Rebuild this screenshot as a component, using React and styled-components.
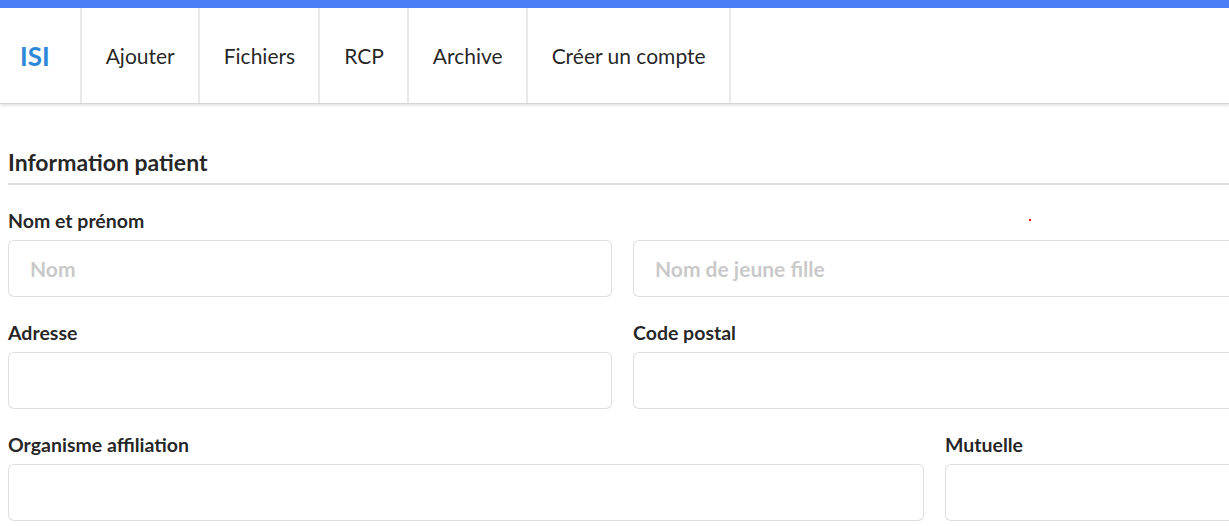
import React from 'react';
import styled, { createGlobalStyle } from 'styled-components';

const GlobalStyle = createGlobalStyle`
    html, body {
        margin: 0;
        padding: 0;
        background: #ffffff;
        overflow: hidden;
    }
    body {
        font-family: Lato, "Open Sans", sans-serif;
        color: rgba(0, 0, 0, 0.87);
    }
    * {
        box-sizing: border-box;
    }
`;

const TopBar = styled.div`
    height: 8px;
    background-color: #4a7ef7;
`;

const Menu = styled.nav`
    display: flex;
    height: 96px;
    background: #ffffff;
    border-bottom: 1px solid #d4d4d5;
    box-shadow: 0 1.5px 3px 0 rgba(34, 36, 38, 0.15);
`;

const MenuItem = styled.a`
    display: flex;
    align-items: center;
    padding-left: ${(props) => (props.header ? '20px' : '24px')};
    padding-right: ${(props) => (props.header ? '30px' : '23px')};
    font-size: ${(props) => (props.header ? '26px' : '21px')};
    font-weight: ${(props) => (props.header ? 700 : 400)};
    color: ${(props) => (props.header ? '#2f87d8' : 'rgba(0, 0, 0, 0.87)')};
    border-right: 2px solid #e8e8e8;
    cursor: pointer;
`;

const Page = styled.main`
    width: 1250px;
    padding: 45px 0 0 8px;
`;

const SectionTitle = styled.h4`
    margin: 0 0 24px 0;
    padding-bottom: 8px;
    font-size: 23px;
    font-weight: 700;
    line-height: 26px;
    color: rgba(0, 0, 0, 0.87);
    border-bottom: 2px solid #e0e0e0;
`;

const Row = styled.div`
    display: grid;
    grid-template-columns: ${(props) => props.columns};
    column-gap: 21px;
    margin-bottom: 24px;
`;

const Field = styled.div`
    position: relative;
    display: flex;
    flex-direction: column;
`;

const Label = styled.label`
    display: block;
    min-height: 30px;
    margin-bottom: 1px;
    font-size: 19.5px;
    font-weight: 700;
    line-height: 24px;
    color: rgba(0, 0, 0, 0.87);
`;

const Input = styled.input`
    width: 100%;
    height: 57px;
    padding: 0 21px;
    font-family: Lato, "Open Sans", sans-serif;
    font-size: 21px;
    font-weight: 700;
    color: rgba(0, 0, 0, 0.87);
    background: #ffffff;
    border: 1.5px solid rgba(34, 36, 38, 0.15);
    border-radius: 6px;
    outline: none;

    &::placeholder {
        color: rgba(191, 191, 191, 0.87);
    }
`;

const RequiredDot = styled.span`
    position: absolute;
    top: 10px;
    left: 396px;
    width: 2px;
    height: 2px;
    background: #ff0000;
`;

const menuItems = ['Ajouter', 'Fichiers', 'RCP', 'Archive', 'Créer un compte'];

const App = () => {
    return (
        <>
            <GlobalStyle />
            <TopBar />
            <Menu>
                <MenuItem header>ISI</MenuItem>
                {menuItems.map((item) => (
                    <MenuItem key={item}>{item}</MenuItem>
                ))}
            </Menu>
            <Page>
                <SectionTitle>Information patient</SectionTitle>
                <Row columns="604px 604px">
                    <Field>
                        <Label>Nom et prénom</Label>
                        <Input placeholder="Nom" />
                    </Field>
                    <Field>
                        <Label />
                        <RequiredDot />
                        <Input placeholder="Nom de jeune fille" />
                    </Field>
                </Row>
                <Row columns="604px 604px">
                    <Field>
                        <Label>Adresse</Label>
                        <Input />
                    </Field>
                    <Field>
                        <Label>Code postal</Label>
                        <Input />
                    </Field>
                </Row>
                <Row columns="916px 292px">
                    <Field>
                        <Label>Organisme affiliation</Label>
                        <Input />
                    </Field>
                    <Field>
                        <Label>Mutuelle</Label>
                        <Input />
                    </Field>
                </Row>
            </Page>
        </>
    );
};

export default App;
